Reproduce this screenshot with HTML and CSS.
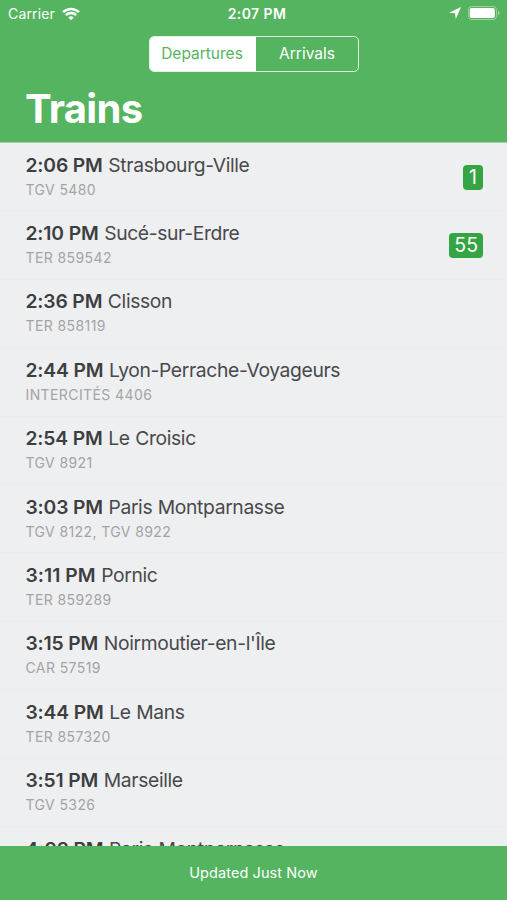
FILE: index.html
```html
<!DOCTYPE html>
<html lang="en">
<head>
<meta charset="utf-8">
<title>Trains</title>
<link rel="stylesheet" href="styles.css">
</head>
<body>
<div class="app">
<header class="header">
<div class="status">
<div class="carrier"><span>Carrier</span>
<svg class="wifi" width="18" height="14" viewBox="0 0 18 14" fill="none" stroke="#fff" stroke-width="2.5"><path d="M1.1 5.1a11.3 11.3 0 0 1 15.8 0M3.9 8.1a7.3 7.3 0 0 1 10.2 0"/><path d="M9 13.2 6.3 10.5a3.8 3.8 0 0 1 5.4 0z" fill="#fff" stroke="none"/></svg></div>
<div class="clock">2:07 PM</div>
<div class="indicators">
<svg width="12" height="12" viewBox="0 0 12 12" fill="#fff"><path d="M12 0 6.8 12 6 6.2 0 5.7z"/></svg>
<svg width="32" height="14" viewBox="0 0 32 14"><rect x=".5" y=".5" width="28" height="13" rx="3.2" fill="none" stroke="#fff" stroke-opacity=".4"/><rect x="1.8" y="2" width="25" height="10" rx="1.8" fill="#fff"/><path d="M30 5q1.6.5 1.6 2t-1.6 2z" fill="#fff" fill-opacity=".5"/></svg>
</div>
</div>
<div class="segments"><div class="segment active"><span>Departures</span></div><div class="segment"><span>Arrivals</span></div></div>
<h1>Trains</h1>
</header>
<main class="list">
<div class="row"><div><p class="main"><b>2:06 PM</b> Strasbourg-Ville</p><p class="sub">TGV 5480</p></div><span class="track">1</span></div>
<div class="row"><div><p class="main"><b>2:10 PM</b> Sucé-sur-Erdre</p><p class="sub">TER 859542</p></div><span class="track">55</span></div>
<div class="row"><div><p class="main"><b>2:36 PM</b> Clisson</p><p class="sub">TER 858119</p></div></div>
<div class="row"><div><p class="main"><b>2:44 PM</b> Lyon-Perrache-Voyageurs</p><p class="sub">INTERCITÉS 4406</p></div></div>
<div class="row"><div><p class="main"><b>2:54 PM</b> Le Croisic</p><p class="sub">TGV 8921</p></div></div>
<div class="row"><div><p class="main"><b>3:03 PM</b> Paris Montparnasse</p><p class="sub">TGV 8122, TGV 8922</p></div></div>
<div class="row"><div><p class="main"><b class="narrow">3:11 PM</b> Pornic</p><p class="sub">TER 859289</p></div></div>
<div class="row"><div><p class="main"><b>3:15 PM</b> Noirmoutier-en-l'Île</p><p class="sub">CAR 57519</p></div></div>
<div class="row"><div><p class="main"><b>3:44 PM</b> Le Mans</p><p class="sub">TER 857320</p></div></div>
<div class="row"><div><p class="main"><b>3:51 PM</b> Marseille</p><p class="sub">TGV 5326</p></div></div>
<div class="row"><div><p class="main"><b>4:03 PM</b> Paris Montparnasse</p></div></div>
</main>
<footer class="footer">Updated Just Now</footer>
</div>
</body>
</html>
```
FILE: styles.css
```css
* { box-sizing: border-box; }
body { margin: 0; font-family: Inter, "Liberation Sans", sans-serif; }
p, h1 { margin: 0; }
.app { height: 900px; display: flex; flex-direction: column; background: #eeeff1; overflow: hidden; }
.header { height: 143px; flex: none; background: #55b45f; color: #fff; border-bottom: 1px solid #a0d1a6; }
.status { height: 27px; display: grid; grid-template-columns: 1fr auto 1fr; align-items: center; padding: 0 7px 0 8px; font-size: 14px; }
.carrier { display: flex; align-items: center; gap: 7px; letter-spacing: .15px; }
.clock { font-weight: 600; font-size: 14px; letter-spacing: .4px; padding-left: 6px; }
.indicators { display: flex; align-items: center; justify-content: flex-end; gap: 7px; margin-top: -1px; }
.segments { width: 210px; height: 36px; margin: 9px 0 0 149px; display: grid; grid-template-columns: 106px 1fr; border: 1px solid #e0f2e2; border-radius: 5px; overflow: hidden; font-size: 15.5px; line-height: 34px; text-align: center; }
.active { background: #fff; color: #55b45f; padding-right: 2px; }
h1 { padding: 12px 0 0 25px; font-size: 40px; line-height: 50px; font-weight: 700; letter-spacing: -.7px; }
.list { flex: 1; min-height: 0; overflow: hidden; color: #48494b; }
.row { height: 68.4px; padding: 7.6px 24px 0 25.5px; display: flex; justify-content: space-between; align-items: flex-start; border-bottom: 1px solid #ebecee; }
.main { font-size: 19.3px; line-height: 28px; letter-spacing: -.36px; word-spacing: .5px; white-space: nowrap; }
.main b { font-weight: 600; color: #3d3e40; letter-spacing: -.15px; word-spacing: 0; }
.main .narrow { letter-spacing: .05px; }
.sub { font-size: 14px; line-height: 22px; letter-spacing: .4px; color: #a3a4a6; }
.track { margin-top: 14px; min-width: 20px; height: 25px; padding: 0 5px; border-radius: 4px; background: #35a544; color: #fff; font-size: 19.5px; line-height: 25px; text-align: center; }
.footer { height: 54px; flex: none; background: #55b45f; color: #fff; font-size: 14.5px; line-height: 54px; text-align: center; letter-spacing: .08px; }
```
